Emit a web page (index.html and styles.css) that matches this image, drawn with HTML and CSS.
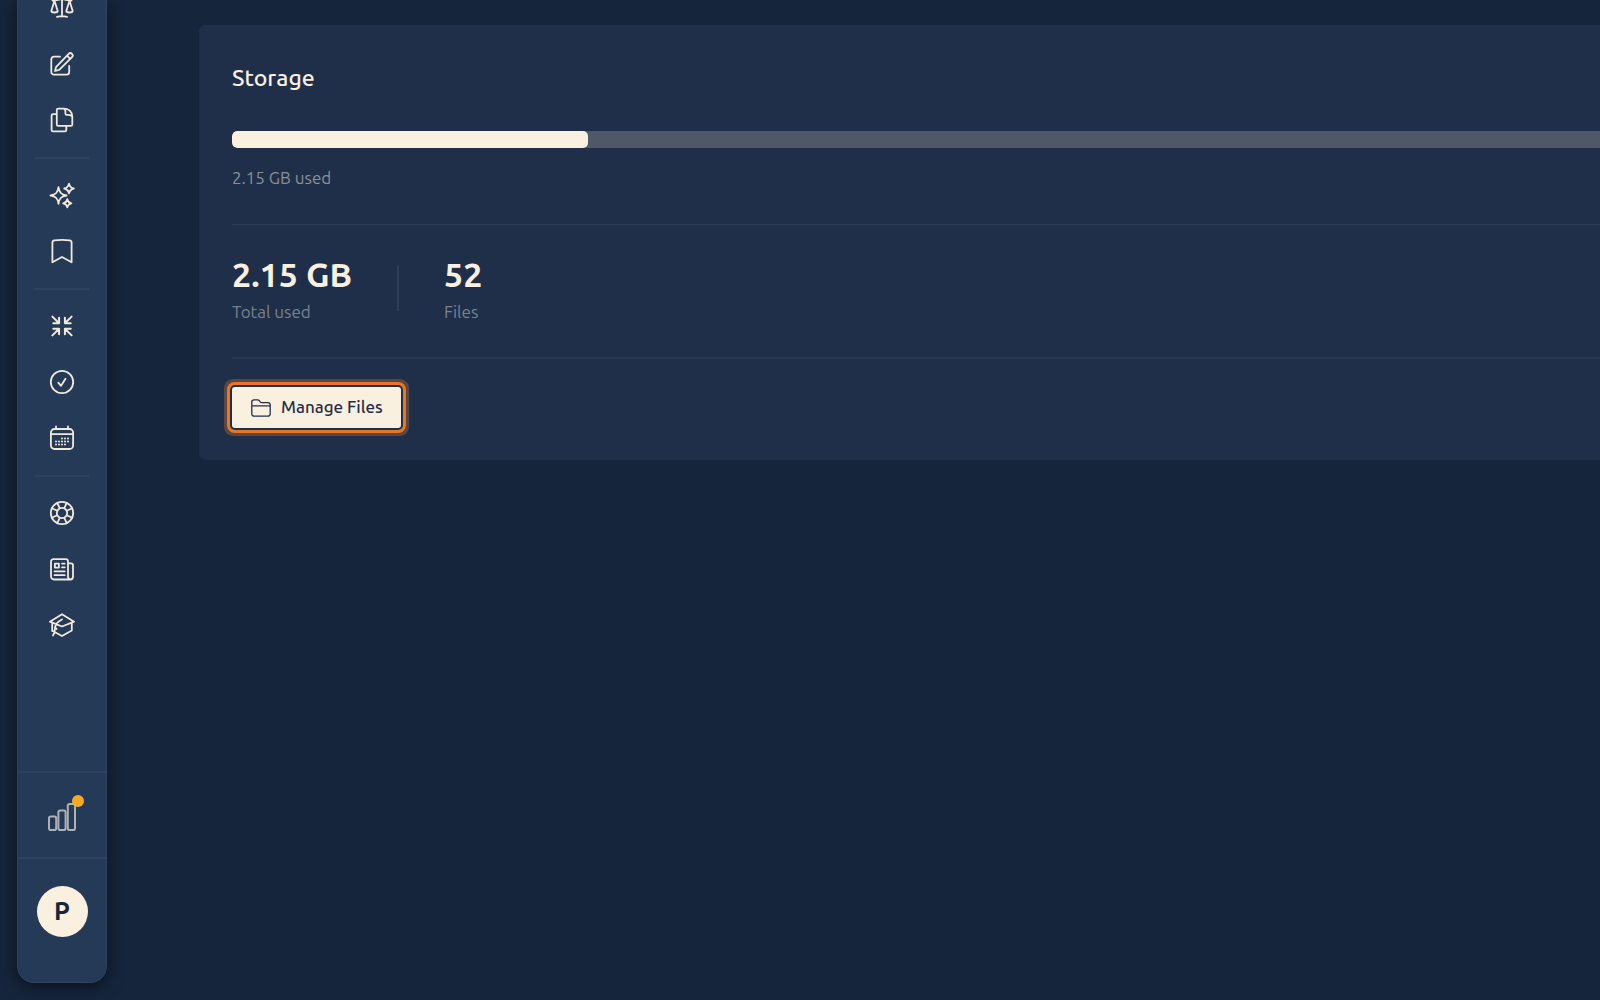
FILE: index.html
```html
<!DOCTYPE html>
<html lang="en">
<head>
    <meta charset="UTF-8">
    <meta name="viewport" content="width=device-width, initial-scale=1.0">
    <title>Storage</title>
    <link rel="stylesheet" href="styles.css">
</head>
<body>
    <aside class="sidebar">
        <!-- Main navigation -->
        <nav class="nav">
            <a class="nav-item" href="#" aria-label="Compare">
                <svg class="icon" viewBox="0 0 24 24"><path d="M12 2.5v18M7 20.8c2.5-.7 7.500-.7 10 0M2.500 4.500c3.500 0 6-.5 9.500-1.500 3.500 1 6 1.500 9.500 1.500M4.500 4.700 1.300 15c.4 2 6 2 6.400 0L4.500 4.700zM19.500 4.700 16.300 15c.4 2 6 2 6.400 0L19.500 4.700z"/></svg>
            </a>
            <a class="nav-item" href="#" aria-label="Write">
                <svg class="icon" viewBox="0 0 24 24"><path d="M10 4.700H4A2.700 2.700 0 0 0 1.300 7.400V20A2.700 2.700 0 0 0 4 22.700h12.500a2.700 2.700 0 0 0 2.700-2.700v-6M5 19l1.200-4.200L18.700 1.900a2.300 2.300 0 0 1 3.300 3.300L9.200 17.800 5 19zM17 3.700 20.300 7"/></svg>
            </a>
            <a class="nav-item" href="#" aria-label="Documents">
                <svg class="icon" viewBox="0 0 24 24"><path d="M6.800 6.200H3c-.8 0-1.400.6-1.400 1.400V22c0 .8.6 1.400 1.400 1.400h11.900c.8 0 1.400-.6 1.400-1.400v-4.200M8.200.6h6.200c4.400 0 7.900 3.500 7.900 7.900v7.900c0 .8-.6 1.400-1.400 1.400H8.200c-.8 0-1.400-.6-1.400-1.400V2c0-.8.6-1.400 1.400-1.400zM13.500.6c1.300.2 1.900 1.500 1.900 3v1.900c0 .8.6 1.400 1.400 1.400h1.700c1.800 0 3.600.7 3.800 2.300"/></svg>
            </a>
            <hr class="nav-divider">
            <a class="nav-item" href="#" aria-label="Assistant">
                <svg class="icon" viewBox="0 0 24 24"><path d="M8.500 4.200C9.300 9.500 11 11.600 16.600 12.500 11 13.400 9.300 15.500 8.500 20.800 7.700 15.500 6 13.400.4 12.500 6 11.600 7.700 9.500 8.500 4.200zM19 .6c.6 3 1.600 4.200 4.800 4.900-3.200.7-4.200 1.900-4.800 4.900-.6-3-1.600-4.200-4.800-4.900 3.200-.7 4.200-1.900 4.800-4.900zM17.300 16.200c.5 2.500 1.500 3.600 4.100 4.100-2.600.5-3.600 1.600-4.100 4.100-.5-2.500-1.500-3.600-4.100-4.100 2.600-.5 3.600-1.600 4.100-4.100z"/></svg>
            </a>
            <a class="nav-item" href="#" aria-label="Bookmarks">
                <svg class="icon" viewBox="0 0 24 24"><path d="M21.600 23.300 12 18l-9.600 5.300V3.500c0-1.200.8-2.100 2-2.200 5-.5 10.200-.5 15.200 0 1.200.1 2 1 2 2.200z"/></svg>
            </a>
            <hr class="nav-divider">
            <a class="nav-item" href="#" aria-label="Compress">
                <svg class="icon icon-bold" viewBox="0 0 24 24"><path d="M1.500 1.800 8.300 8.500M8.800 3V9H2.500M22.500 1.800 15.700 8.500M15.200 3V9h6.300M1.500 22.200 8.300 15.500M8.800 21V15H2.500M22.500 22.200 15.700 15.500M15.200 21V15h6.300"/></svg>
            </a>
            <a class="nav-item" href="#" aria-label="Tasks">
                <svg class="icon" viewBox="0 0 24 24"><circle cx="12" cy="12" r="11.200"/><path d="M8.300 12.700 11 15.800l4.500-7"/></svg>
            </a>
            <a class="nav-item" href="#" aria-label="Calendar">
                <svg class="icon" viewBox="0 0 24 24"><rect x=".9" y="3" width="22.200" height="20" rx="3.500"/><path d="M6 .500V3M18 .500V3M.9 8.200h22.200"/><path class="icon-dots" d="M6 15.500h0M6 18.500h0M9 15.500h0M9 18.500h0M12 12.500h0M12 15.500h0M12 18.500h0M15 12.500h0M15 15.500h0M15 18.500h0M18 12.500h0M18 15.500h0"/></svg>
            </a>
            <hr class="nav-divider">
            <a class="nav-item" href="#" aria-label="Help">
                <svg class="icon" viewBox="0 0 24 24"><circle cx="12" cy="12" r="11.200"/><circle cx="12" cy="12" r="5.200"/><path d="M9.800 7.300 7.300 1.800M7.300 9.800 1.800 7.300M14.200 7.300l2.500-5.500M16.700 9.800l5.500-2.500M9.800 16.700l-2.500 5.500M7.300 14.200l-5.500 2.500M14.200 16.700l2.500 5.500M16.700 14.200l5.500 2.500"/></svg>
            </a>
            <a class="nav-item" href="#" aria-label="News">
                <svg class="icon" viewBox="0 0 24 24"><path d="M18 6.300h3a2 2 0 0 1 2 2v11.500a2.700 2.700 0 0 1-2.700 2.700H4A3 3 0 0 1 1 19.500V4.500a2.300 2.300 0 0 1 2.300-2.300h12.400A2.300 2.300 0 0 1 18 4.500v15.300a2.700 2.700 0 0 0 2.500 2.700M4.900 6.600h4v4h-4zM12 6.600h2.700M12 10.300h2.700M4.500 14.300h10.200M4.500 18.200h10.200"/></svg>
            </a>
            <a class="nav-item" href="#" aria-label="Learn">
                <svg class="icon icon-wide" viewBox="0 0 26 24"><path d="M13 1.200.9 8.700 13 13.500l12.100-4.800zM22.800 9.800v7.700L13 23l-6-3.200M3.200 9.800V18M13 6.500c-4 2-7 4-7 8.500 0 3-.5 5.500-2 7.500M3.200 17.500 6.500 19.500M6 14l1.500 2"/></svg>
            </a>
        </nav>

        <!-- Usage and account -->
        <div class="usage">
            <a class="usage-link" href="#" aria-label="Usage">
                <svg class="usage-icon" viewBox="0 0 28 28"><rect x="1" y="13.500" width="7.200" height="13.500" rx="1.800"/><rect x="10.400" y="7.500" width="7.200" height="19.500" rx="1.800"/><rect x="19.800" y="1" width="7.200" height="26" rx="1.800"/></svg>
                <span class="usage-badge"></span>
            </a>
        </div>
        <div class="account">
            <button class="avatar" type="button">P</button>
        </div>
    </aside>

    <main class="main">
        <section class="card">
            <h2 class="card-title">Storage</h2>
            <div class="progress">
                <div class="progress-fill" style="width: 26%"></div>
            </div>
            <p class="caption">2.15 GB used</p>

            <div class="stats">
                <div class="stat">
                    <span class="stat-value">2.15 GB</span>
                    <span class="stat-label">Total used</span>
                </div>
                <div class="stat-divider"></div>
                <div class="stat">
                    <span class="stat-value">52</span>
                    <span class="stat-label">Files</span>
                </div>
            </div>

            <button class="manage-button" type="button">
                <svg class="folder-icon" viewBox="0 0 20 18"><path d="M.8 6.800V3A2.200 2.200 0 0 1 3 .8h3.600c.7 0 1.300.3 1.700.8l.9 1.200c.4.500 1 .8 1.700.8H17a2.200 2.200 0 0 1 2.200 2.200V15a2.200 2.200 0 0 1-2.200 2.200H3A2.200 2.200 0 0 1 .8 15zh18.400"/></svg>
                <span class="manage-label">Manage Files</span>
            </button>
        </section>
    </main>
</body>
</html>
```
FILE: styles.css
```css
* {
    box-sizing: border-box;
}

body {
    margin: 0;
    display: flex;
    height: 100vh;
    overflow: hidden;
    background-color: #15253b;
    color: #faf0e0;
    font-family: Ubuntu, "Noto Sans", sans-serif;
}

/* Sidebar */
.sidebar {
    display: flex;
    flex-direction: column;
    flex: none;
    width: 90px;
    margin: 0 0 17px 17px;
    overflow: hidden;
    background-color: #253a56;
    border: 1px solid #2f435f;
    border-top: 0;
    border-radius: 0 0 17px 17px;
    box-shadow: 0 4px 16px rgba(0, 0, 0, 0.5);
}

.nav {
    flex: 1;
    margin-top: -20px;
}

.nav-item {
    display: flex;
    align-items: center;
    justify-content: center;
    height: 56px;
}

.nav-divider {
    width: 54px;
    height: 2px;
    margin: 9px auto 8px;
    border: 0;
    background-color: #2f435f;
}

.icon {
    width: 24px;
    height: 24px;
    overflow: visible;
    fill: none;
    stroke: #f1e9dc;
    stroke-width: 1.8;
    stroke-linecap: round;
    stroke-linejoin: round;
}

.icon-bold {
    width: 22px;
    stroke-width: 2.2;
}

.icon-wide {
    width: 26px;
}

.icon-dots {
    stroke-width: 2;
}

.usage,
.account {
    display: flex;
    justify-content: center;
    border-top: 2px solid #2f435f;
}

.usage {
    height: 86px;
    padding-top: 30px;
}

.usage-link {
    position: relative;
    display: block;
    height: 28px;
}

.usage-icon {
    width: 28px;
    height: 28px;
    fill: none;
    stroke: #aeb0b4;
    stroke-width: 2;
}

.usage-badge {
    position: absolute;
    top: -8px;
    right: -8px;
    width: 12px;
    height: 12px;
    border-radius: 50%;
    background-color: #faaa22;
}

.account {
    height: 125px;
    padding-top: 27px;
}

.avatar {
    width: 51px;
    height: 51px;
    padding: 0 0 2px;
    border: 0;
    border-radius: 50%;
    background-color: #faf0e0;
    color: #15253b;
    font-family: inherit;
    font-size: 25px;
    font-weight: 600;
    cursor: pointer;
}

/* Storage card */
.main {
    flex: 1;
    padding: 25px 0 0 92px;
}

.card {
    padding: 35px 0 32px 33px;
    background-color: #1f2f49;
    border-radius: 6px 0 0 6px;
}

.card-title {
    margin: 0 0 35px;
    font-size: 23px;
    font-weight: 500;
    line-height: 36px;
}

.progress {
    height: 17px;
    overflow: hidden;
    border-radius: 5px 0 0 5px;
    background-color: #4f5868;
}

.progress-fill {
    height: 100%;
    border-radius: 5px;
    background-color: #faf0e0;
}

.caption {
    margin: 17px 0 34px;
    color: #8a9098;
    font-size: 17px;
    line-height: 25px;
}

.stats {
    display: flex;
    align-items: center;
    gap: 45px;
    height: 135px;
    margin-bottom: 28px;
    padding-bottom: 6px;
    border-top: 1px solid #2c3c52;
    border-bottom: 2px solid #293950;
}

.stat {
    display: flex;
    flex-direction: column;
    gap: 4px;
}

.stat-value {
    font-size: 34px;
    font-weight: 600;
    line-height: 42px;
}

.stat-label {
    color: #7a818c;
    font-size: 17px;
    line-height: 25px;
}

.stat-divider {
    width: 2px;
    height: 45px;
    background-color: #2f3e54;
}

.manage-button {
    display: flex;
    align-items: center;
    gap: 10px;
    height: 41px;
    padding: 0 18px 0 19px;
    border: 0;
    border-radius: 3px;
    background-color: #faf0e0;
    color: #1f2f49;
    font-family: inherit;
    font-size: 17px;
    font-weight: 500;
    cursor: pointer;
    box-shadow: 0 0 0 2px #1f2f49, 0 0 0 5px #e87722, 0 0 0 8px #5b4641;
}

.manage-label {
    padding-bottom: 3px;
}

.folder-icon {
    width: 20px;
    height: 18px;
    fill: none;
    stroke: #1f2f49;
    stroke-width: 1.3;
    stroke-linejoin: round;
}
```
